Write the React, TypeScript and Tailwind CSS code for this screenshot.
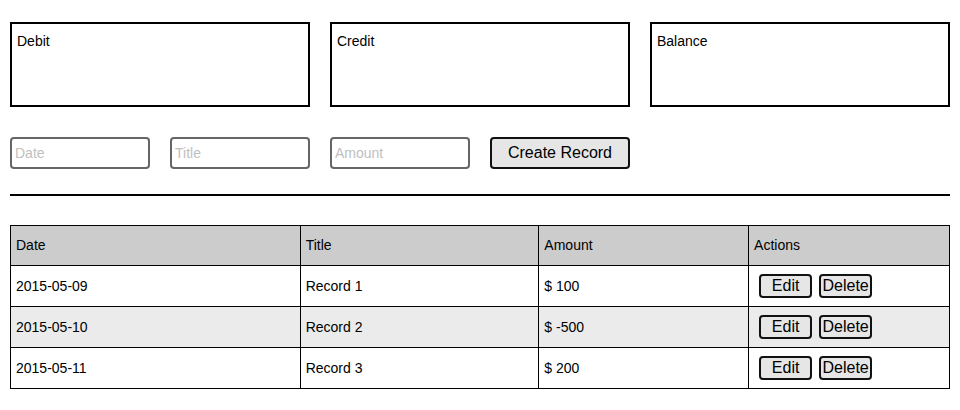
import React from "react";

const rows = [
  { date: "2015-05-09", title: "Record 1", amount: "$ 100" },
  { date: "2015-05-10", title: "Record 2", amount: "$ -500" },
  { date: "2015-05-11", title: "Record 3", amount: "$ 200" },
];

export default function App() {
  return (
    <div className="p-[10px] pt-[22px] text-black bg-white" style={{ fontFamily: '"Liberation Sans", Arial, sans-serif' }}>
      <div className="flex gap-[20px]">
        {["Debit", "Credit", "Balance"].map((t) => (
          <div key={t} className="w-[300px] h-[85px] border-2 border-black px-[5px] py-[9px] text-[14px] leading-[16px]">
            {t}
          </div>
        ))}
      </div>
      <div className="flex gap-[20px] mt-[30px]">
        {["Date", "Title", "Amount"].map((p) => (
          <input
            key={p}
            placeholder={p}
            className="w-[140px] h-[32px] border-2 border-[#666] rounded-[4px] px-[3px] text-[14px] placeholder:text-[#c0c0c0] outline-none"
          />
        ))}
        <button className="w-[140px] h-[32px] border-2 border-[#111] rounded-[4px] bg-[#e6e6e6] text-[16px]">
          Create Record
        </button>
      </div>
      <div className="mt-[25px] h-[2px] bg-black" />
      <table className="mt-[29px] w-[940px] border-collapse text-[14px]">
        <thead>
          <tr className="bg-[#cccccc] h-[40px]">
            <th className="w-[290px] border border-black text-left font-normal px-[5px]">Date</th>
            <th className="w-[239px] border border-black text-left font-normal px-[5px]">Title</th>
            <th className="w-[210px] border border-black text-left font-normal px-[5px]">Amount</th>
            <th className="w-[201px] border border-black text-left font-normal px-[5px]">Actions</th>
          </tr>
        </thead>
        <tbody>
          {rows.map((r, i) => (
            <tr key={r.date} className={`h-[41px] ${i % 2 === 1 ? "bg-[#ebebeb]" : "bg-white"}`}>
              <td className="border border-black px-[5px]">{r.date}</td>
              <td className="border border-black px-[5px]">{r.title}</td>
              <td className="border border-black px-[5px]">{r.amount}</td>
              <td className="border border-black pl-[10px]">
                <div className="flex gap-[7px]">
                  <button className="w-[53px] h-[24px] border-2 border-[#111] rounded-[4px] bg-[#e6e6e6] text-[16px] leading-[18px]">Edit</button>
                  <button className="w-[53px] h-[24px] border-2 border-[#111] rounded-[4px] bg-[#e6e6e6] text-[16px] leading-[18px]">Delete</button>
                </div>
              </td>
            </tr>
          ))}
        </tbody>
      </table>
    </div>
  );
}
